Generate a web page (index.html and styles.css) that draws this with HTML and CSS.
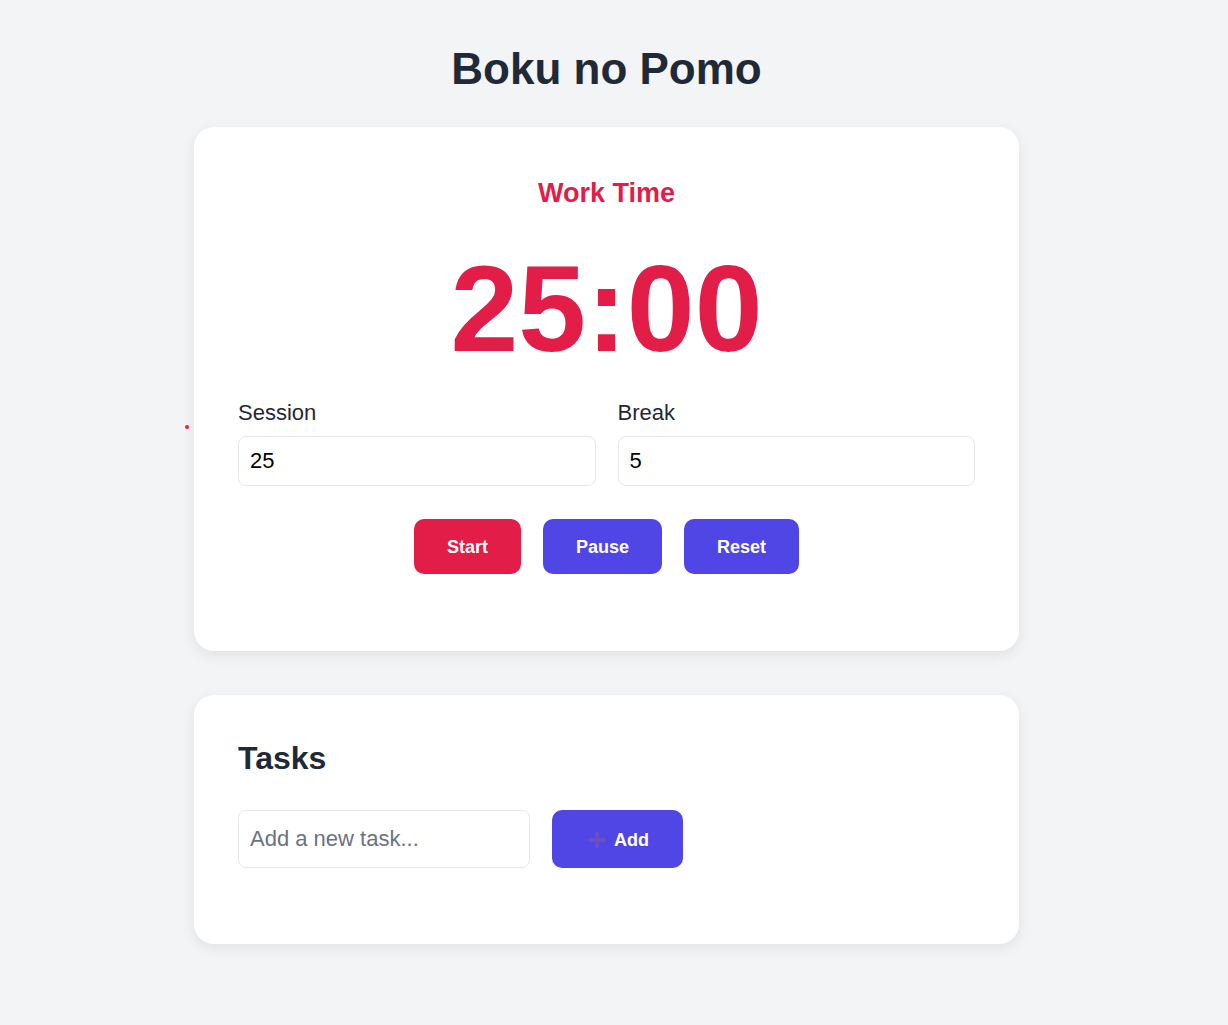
FILE: index.html
```html
<!DOCTYPE html>
<html lang="en">
<head>
<meta charset="utf-8">
<title>Boku no Pomo</title>
<link rel="stylesheet" href="styles.css">
</head>
<body>
<main class="page">
  <h1 class="title">Boku no Pomo</h1>

  <section class="card timer-card">
    <span class="dot"></span>
    <h2 class="mode">Work Time</h2>
    <div class="clock">25:00</div>
    <div class="settings">
      <label class="field">
        <span class="field-label">Session</span>
        <input class="input" type="text" value="25">
      </label>
      <label class="field">
        <span class="field-label">Break</span>
        <input class="input" type="text" value="5">
      </label>
    </div>
    <div class="controls">
      <button class="btn btn-red">Start</button>
      <button class="btn btn-indigo">Pause</button>
      <button class="btn btn-indigo">Reset</button>
    </div>
  </section>

  <section class="card tasks-card">
    <h2 class="tasks-title">Tasks</h2>
    <div class="task-row">
      <input class="input task-input" type="text" placeholder="Add a new task...">
      <button class="btn btn-indigo btn-add">
        <svg class="plus" width="18" height="18" viewBox="0 0 18 18" aria-hidden="true">
          <path d="M9 1v16M1 9h16" stroke="#6a4ec6" stroke-width="4" fill="none"/>
        </svg>
        <span>Add</span>
      </button>
    </div>
  </section>
</main>
</body>
</html>
```

FILE: styles.css
```css
* { box-sizing: border-box; }

html, body {
  margin: 0;
  padding: 0;
}

body {
  background: #f3f4f6;
  font-family: "Liberation Sans", Arial, sans-serif;
  color: #1f2937;
  padding-right: 15px;
}

.page {
  width: 825px;
  margin: 0 auto;
  padding-top: 43px;
  padding-bottom: 40px;
}

.title {
  margin: 0 0 32px;
  font-size: 44px;
  line-height: 52px;
  font-weight: 700;
  text-align: center;
  color: #1f2937;
}

.card {
  position: relative;
  background: #ffffff;
  border-radius: 20px;
  box-shadow: 0 4px 14px rgba(0, 0, 0, 0.08);
  padding: 44px 44px 77px;
}

.timer-card {
  display: flex;
  flex-direction: column;
  align-items: stretch;
}

.dot {
  position: absolute;
  left: -9px;
  top: 298px;
  width: 4px;
  height: 4px;
  border-radius: 50%;
  background: #e8202e;
}

.mode {
  margin: 0;
  font-size: 27px;
  line-height: 44px;
  font-weight: 700;
  color: #e11d48;
  text-align: center;
}

.clock {
  margin-top: 33px;
  font-size: 122px;
  line-height: 122px;
  font-weight: 700;
  color: #e11d48;
  text-align: center;
}

.settings {
  margin-top: 30px;
  display: grid;
  grid-template-columns: 1fr 1fr;
  gap: 22px;
}

.field {
  display: flex;
  flex-direction: column;
  gap: 10px;
}

.field-label {
  font-size: 22px;
  line-height: 26px;
  color: #1f2937;
}

.input {
  height: 50px;
  width: 100%;
  border: 1px solid #e5e7eb;
  border-radius: 8px;
  padding: 0 11px;
  font-family: "Liberation Sans", Arial, sans-serif;
  font-size: 22px;
  color: #000;
  background: #fff;
  outline: none;
}

.input::placeholder {
  color: #6b7280;
}

.controls {
  margin-top: 33px;
  display: flex;
  justify-content: center;
  gap: 22px;
}

.btn {
  height: 55px;
  padding: 1px 33px 0;
  border: none;
  border-radius: 10px;
  font-family: "Liberation Sans", Arial, sans-serif;
  font-size: 18px;
  font-weight: 700;
  color: #ffffff;
  cursor: pointer;
}

.btn-red { background: #e11d48; }
.btn-indigo { background: #4f46e5; }

.tasks-card {
  margin-top: 44px;
  padding-bottom: 76px;
}

.tasks-title {
  margin: 0;
  font-size: 32px;
  line-height: 38px;
  font-weight: 700;
  color: #1f2937;
}

.task-row {
  margin-top: 33px;
  display: flex;
  gap: 22px;
}

.task-input {
  width: 292px;
  height: 58px;
}

.btn-add {
  height: 58px;
  width: 131px;
  padding: 2px 0 0 2px;
  display: flex;
  align-items: center;
  justify-content: center;
  gap: 8px;
}

.plus { display: block; }
```
